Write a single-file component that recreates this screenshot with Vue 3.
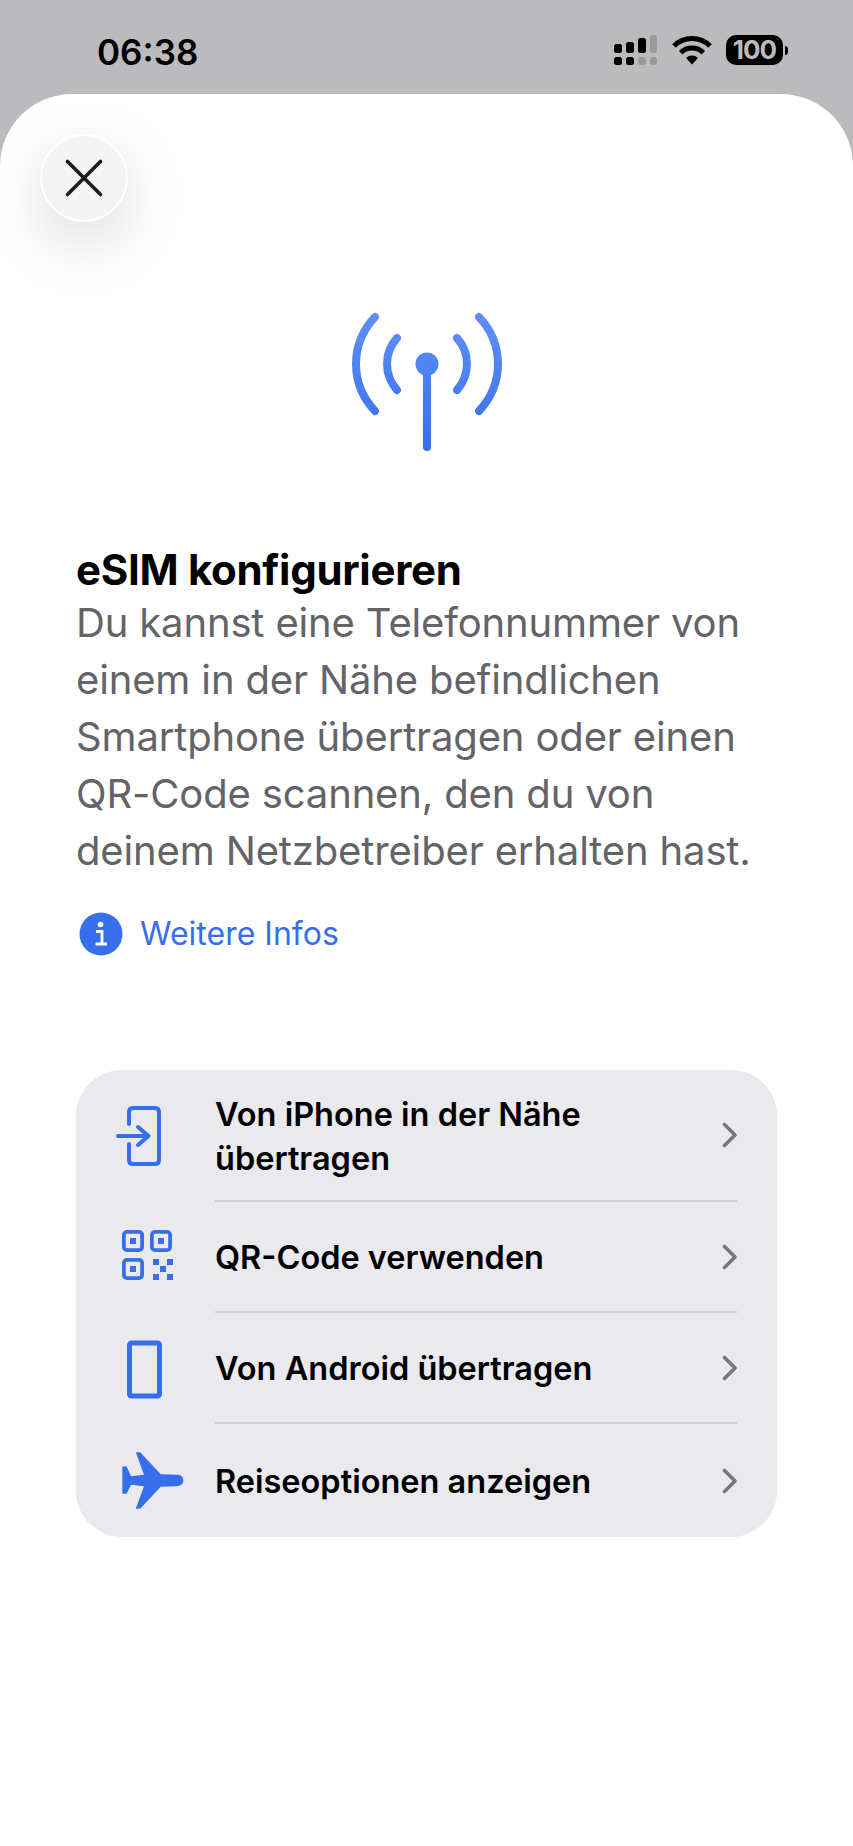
<template>
  <div class="screen">
    <header class="status">
      <span class="time">06:38</span>
      <div class="status-icons">
        <svg class="signal" width="44" height="32" viewBox="0 0 44 32">
          <rect x="0" y="9" width="8" height="9" rx="2.5" fill="#000" />
          <rect x="12" y="7" width="8" height="11" rx="2.5" fill="#000" />
          <rect x="24" y="3" width="8" height="15" rx="2.5" fill="#000" />
          <rect x="36" y="0" width="7" height="18" rx="2.5" fill="#9a9a9c" />
          <rect x="0" y="22" width="8" height="8" rx="2.5" fill="#000" />
          <rect x="12" y="22" width="8" height="8" rx="2.5" fill="#000" />
          <rect x="24" y="22" width="8" height="8" rx="2.5" fill="#9a9a9c" />
          <rect x="36" y="22" width="7" height="8" rx="2.5" fill="#9a9a9c" />
        </svg>
        <svg class="wifi" width="40" height="30" viewBox="0 0 40 30">
          <path d="M2 11 A25.5 25.5 0 0 1 38 11" fill="none" stroke="#000" stroke-width="5" />
          <path d="M8.7 17.7 A16 16 0 0 1 31.3 17.7" fill="none" stroke="#000" stroke-width="5" />
          <path d="M14 23 A8.5 8.5 0 0 1 26 23 L20 29.5 Z" fill="#000" />
        </svg>
        <div class="battery">
          <span class="battery-level">100</span>
          <span class="battery-nub"></span>
        </div>
      </div>
    </header>

    <main class="sheet">
      <button class="close" aria-label="Schließen">
        <svg width="38" height="38" viewBox="0 0 38 38">
          <path d="M2.5 2.5 L35.5 35.5 M35.5 2.5 L2.5 35.5" fill="none" stroke="#1c1c1e" stroke-width="3.6" stroke-linecap="round" />
        </svg>
      </button>

      <svg class="antenna" width="156" height="144" viewBox="0 0 156 144">
        <defs>
          <linearGradient id="antenna-blue" gradientUnits="userSpaceOnUse" x1="0" y1="0" x2="0" y2="144">
            <stop offset="0" stop-color="#5f91f6" />
            <stop offset="1" stop-color="#376eec" />
          </linearGradient>
        </defs>
        <g fill="none" stroke="url(#antenna-blue)" stroke-width="8" stroke-linecap="round">
          <path d="M26 7 C0.7 34 0.7 74 26 101" />
          <path d="M130 7 C155.3 34 155.3 74 130 101" />
          <path d="M48 28 C34.7 43 34.7 65 48 80" />
          <path d="M108 28 C121.3 43 121.3 65 108 80" />
          <path d="M78 54 L78 137" />
        </g>
        <circle cx="78" cy="54" r="11.5" fill="url(#antenna-blue)" />
      </svg>

      <section class="intro">
        <h1>eSIM konfigurieren</h1>
        <p>Du kannst eine Telefonnummer von einem in der Nähe befindlichen Smartphone übertragen oder einen QR-Code scannen, den du von deinem Netzbetreiber erhalten hast.</p>
        <a class="more">
          <svg width="44" height="44" viewBox="0 0 44 44">
            <circle cx="22" cy="22" r="21.5" fill="#376eec" />
            <circle cx="21.5" cy="12.5" r="2.8" fill="#fff" />
            <path d="M17 19.5 H23 V31.5 M16.5 32 H28" fill="none" stroke="#fff" stroke-width="2.8" />
          </svg>
          <span>Weitere Infos</span>
        </a>
      </section>

      <ul class="options">
        <li v-for="row in rows" :key="row.icon" class="option" :class="{ tall: row.tall }">
          <svg class="option-icon" width="72" height="72" viewBox="0 0 72 72">
            <template v-if="row.icon === 'transfer'">
              <path d="M17 24 V12 Q17 8 21 8 H43 Q47 8 47 12 V60 Q47 64 43 64 H21 Q17 64 17 60 V44" fill="none" stroke="#376eec" stroke-width="4" stroke-linecap="round" />
              <path d="M6 36 H36 M26 27 L36.5 36 L26 45" fill="none" stroke="#376eec" stroke-width="4" stroke-linecap="round" stroke-linejoin="round" />
            </template>
            <template v-else-if="row.icon === 'qr'">
              <g fill="none" stroke="#376eec" stroke-width="3.8">
                <rect x="11.9" y="9.9" width="18.2" height="18.2" rx="3" />
                <rect x="39.9" y="9.9" width="18.2" height="18.2" rx="3" />
                <rect x="11.9" y="37.9" width="18.2" height="18.2" rx="3" />
              </g>
              <g fill="#376eec">
                <rect x="18" y="16" width="6" height="6" />
                <rect x="46" y="16" width="6" height="6" />
                <rect x="18" y="44" width="6" height="6" />
                <rect x="41" y="37" width="6" height="6" />
                <rect x="55" y="37" width="6" height="6" />
                <rect x="48" y="44" width="6" height="6" />
                <rect x="41" y="52" width="6" height="6" />
                <rect x="55" y="52" width="6" height="6" />
              </g>
            </template>
            <template v-else-if="row.icon === 'phone'">
              <rect x="17.5" y="10" width="30" height="53" rx="2" fill="none" stroke="#376eec" stroke-width="5" />
            </template>
            <template v-else>
              <path transform="translate(8 5.5) scale(0.3333)" fill="#376eec" d="M190 90 C190 76 178 73 170 73 L122 71 L62 7 C60 5 50 5 48 7 L72 73 L33 77 L20 48 L7 48 L7 130 L20 130 L33 103 L72 107 L48 173 C50 175 60 175 62 173 L122 109 L170 107 C178 107 190 104 190 90 Z" />
            </template>
          </svg>
          <div class="option-body">
            <span class="option-label" v-html="row.label"></span>
            <svg class="chevron" width="16" height="26" viewBox="0 0 16 26">
              <path d="M2.5 2.5 L13 13 L2.5 23.5" fill="none" stroke="#77777c" stroke-width="3.6" stroke-linecap="round" stroke-linejoin="round" />
            </svg>
          </div>
        </li>
      </ul>
    </main>
  </div>
</template>

<script setup>
const rows = [
  { icon: 'transfer', label: 'Von iPhone in der Nähe<br>übertragen', tall: true },
  { icon: 'qr', label: 'QR-Code verwenden' },
  { icon: 'phone', label: 'Von Android übertragen' },
  { icon: 'plane', label: 'Reiseoptionen anzeigen' },
]
</script>

<style>
html,
body {
  margin: 0;
  background: #bbbbbd;
}
</style>

<style scoped>
* {
  box-sizing: border-box;
}

.screen {
  width: 853px;
  height: 1846px;
  display: flex;
  flex-direction: column;
  font-family: Inter, "Liberation Sans", sans-serif;
  overflow: hidden;
}

.status {
  height: 94px;
  flex: none;
  display: flex;
  justify-content: space-between;
  padding: 30px 65px 0 97px;
  color: #000;
}

.time {
  font-size: 35px;
  line-height: 44px;
  font-weight: 600;
}

.status-icons {
  display: flex;
  align-items: flex-start;
  padding-top: 5px;
}

.wifi {
  margin-left: 14px;
}

.battery {
  display: flex;
  align-items: center;
  margin-left: 14px;
  height: 30px;
}

.battery-level {
  width: 57px;
  height: 30px;
  border-radius: 10px;
  background: #000;
  color: #bbbbbd;
  font-size: 26px;
  line-height: 30px;
  font-weight: 700;
  text-align: center;
  letter-spacing: -1px;
}

.battery-nub {
  width: 3px;
  height: 9px;
  margin-left: 2px;
  background: #000;
  border-radius: 0 4px 4px 0;
}

.sheet {
  flex: 1;
  background: #fff;
  border-radius: 72px 72px 0 0;
  padding: 40px 0 0;
  display: flex;
  flex-direction: column;
  overflow: hidden;
}

.close {
  width: 88px;
  height: 88px;
  margin-left: 40px;
  padding: 0;
  flex: none;
  display: flex;
  align-items: center;
  justify-content: center;
  border: 2px solid #fff;
  border-radius: 50%;
  background: #f4f4f5;
  box-shadow: 0 20px 64px rgba(0, 0, 0, 0.15);
}

.antenna {
  flex: none;
  margin: 88px 0 0 349px;
}

.intro {
  margin: 0 0 0 76px;
  padding-top: 91px;
  width: 720px;
}

h1 {
  margin: 0;
  font-size: 42px;
  line-height: 50px;
  font-weight: 700;
  color: #000;
  letter-spacing: -0.3px;
}

p {
  margin: -1px 0 0;
  font-size: 40px;
  line-height: 57px;
  color: #636368;
  letter-spacing: -0.15px;
  width: 686px;
}

.more {
  display: flex;
  align-items: center;
  gap: 17px;
  margin: 33px 0 0 3px;
  font-size: 32px;
  line-height: 44px;
  color: #376eec;
}

.options {
  list-style: none;
  margin: 114px 0 0 76px;
  padding: 0;
  width: 701px;
  border-radius: 46px;
  background: #e9e9ee;
}

.option {
  display: flex;
  align-items: center;
  padding-left: 36px;
}

.option-icon {
  flex: none;
  margin-right: 31px;
}

.option-body {
  flex: 1;
  min-height: 111px;
  margin-right: 40px;
  display: flex;
  align-items: center;
  justify-content: space-between;
  border-bottom: 2px solid #d0d0d5;
}

.tall .option-body {
  min-height: 132px;
}

.option:last-child .option-body {
  min-height: 113px;
  border-bottom: 0;
}

.option-label {
  padding-top: 3px;
  font-size: 32.5px;
  line-height: 44px;
  font-weight: 600;
  color: #000;
}

.chevron {
  margin-right: -1px;
}
</style>
